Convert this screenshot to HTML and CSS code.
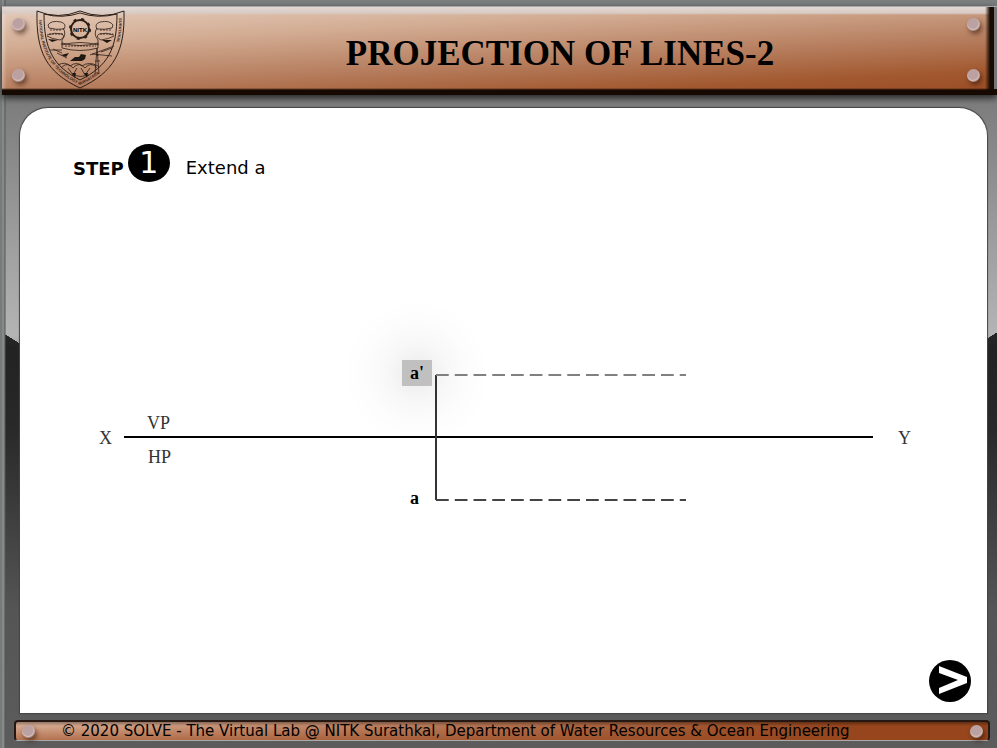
FILE: index.html
```html
<!DOCTYPE html>
<html lang="en">
<head>
<meta charset="utf-8">
<title>Projection of Lines-2</title>
<link rel="stylesheet" href="styles.css">
</head>
<body>
<div class="frame">
  <header class="banner">
    <div class="rivets"><span class="rivet"></span><span class="rivet"></span></div>
    <svg class="crest" viewBox="0 0 90 80" role="img" aria-label="NITK crest">
      <defs>
        <path id="rimLeft" d="M3 10C4 44 17 62 44 75C72 62 81 46 84 30"/>
        <path id="rimRight" d="M83 8Q83 24 79 38"/>
      </defs>
      <g fill="none" stroke="#2c1d16" stroke-width="1">
        <path d="M1 1Q22 10 44 1Q66 10 88 1C89 42 78 62 44 78C10 62 0 42 1 1Z"/>
        <path d="M8 4Q26 9 44 3Q62 9 81 4C81 39 72 56 44 70C17 56 8 39 8 4Z"/>
        <circle cx="44" cy="19" r="9" stroke-width="2"/>
        <circle cx="44" cy="19" r="10" stroke-width="2" stroke-dasharray="3 5"/>
        <path stroke-width=".8" d="M12 15q3-5 13-3q6 2 3 7q-8 1-15-1zM11 25q8-3 15-1q4 3-2 6q-8-1-13-4M77 15q-3-5-13-3q-6 2-3 7q8 1 15-1zM78 25q-8-3-15-1q-4 3 2 6q8-1 13-4M27 18q4 6-1 12v5q18-5 36 0v-5q-5-6-1-12M26 33q18 5 36 0v5q-18 5-36 0z"/>
        <path stroke-width=".8" d="M14 40h12M17 39l9 4M21 43l10 5M59 64l2-26 2 26M60 45h3M59 51h5M54 45l24-9M56 44l20 2M65 42l11-4M25 58q6-7 12 0q6-7 12 0q6-7 12 0M22 55q7-4 12 1q7-5 12 0q7-5 16 0M32 58l5 7 4-7M45 58l4 7 5-7M36 65q9 3 17 0"/>
        <path stroke-width=".8" d="M14 20h11M13 24h14M64 20h12M64 24h13M29 36h31" stroke-dasharray="2 1"/>
      </g>
      <path fill="#211712" d="M34 51l5-4h4l2-3 5 1-1 4-3 2zM25 45l8-2-3 4zM12 29l10 1-6 2zM66 30l10 0-5 3zM36 63l3 5 1-5zM48 63l3 5 1-5z"/>
      <text class="crest-mono" x="44" y="22">NITK</text>
      <text class="crest-rim"><textPath href="#rimLeft">NATIONAL INSTITUTE OF TECHNOLOGY KARNATAKA</textPath></text>
      <text class="crest-rim"><textPath href="#rimRight">SURATHKAL</textPath></text>
    </svg>
    <h1 class="title">PROJECTION OF LINES-2</h1>
    <div class="rivets"><span class="rivet"></span><span class="rivet"></span></div>
  </header>

  <main class="panel">
    <div class="step">
      <strong class="step-label">STEP</strong>
      <span class="step-number">1</span>
      <p class="step-text">Extend a</p>
    </div>
    <svg class="diagram" viewBox="0 0 967 240" role="img" aria-label="Projections of point a above and below line XY">
      <defs>
        <radialGradient id="glow">
          <stop offset="0" stop-color="#000" stop-opacity=".08"/>
          <stop offset=".4" stop-color="#000" stop-opacity=".03"/>
          <stop offset=".7" stop-color="#000" stop-opacity=".01"/>
          <stop offset="1" stop-color="#000" stop-opacity="0"/>
        </radialGradient>
      </defs>
      <circle cx="397" cy="83" r="74" fill="url(#glow)"/>
      <rect x="382" y="70" width="30" height="26" fill="#c0c0c0"/>
      <path class="axis" d="M104 147H853"/>
      <path class="projector" d="M416 85V210"/>
      <path class="dash faint" pathLength="1000" d="M416 85H666"/>
      <path class="dash" pathLength="1000" d="M416 210H666"/>
      <text class="point" x="390" y="89">a'</text>
      <text class="point" x="390" y="214">a</text>
      <text class="axis-name" x="79" y="154">X</text>
      <text class="axis-name" x="878" y="154">Y</text>
      <text class="axis-name" x="127" y="139">VP</text>
      <text class="axis-name" x="128" y="173">HP</text>
    </svg>
    <button class="next" type="button" aria-label="Next step">
      <svg viewBox="0 0 42 42"><circle cx="21" cy="21" r="21"/><path d="M10 6L38 17V23L10 34V28L29 20L10 13Z" fill="#fff"/></svg>
    </button>
  </main>

  <footer class="footer">
    <span class="rivet"></span>
    <p class="copyright">© 2020 SOLVE - The Virtual Lab @ NITK Surathkal, Department of Water Resources &amp; Ocean Engineering</p>
    <span class="rivet"></span>
  </footer>
</div>
</body>
</html>
```
FILE: styles.css
```css
* { box-sizing: border-box; }

body {
  margin: 0;
  font-family: Verdana, "DejaVu Sans", sans-serif;
  color: #000;
}

.frame {
  min-height: 100vh;
  display: flex;
  flex-direction: column;
  padding: 6px 0 7px;
  border-left: 2px solid #777b7a;
  background:
    linear-gradient(90deg, #858988 0 2px, #555 3px, transparent 4px),
    linear-gradient(#7b7f80 0 6px, transparent 6px),
    linear-gradient(32deg, #242424 49%, transparent 50%) 0 332px / 20px 13px no-repeat,
    linear-gradient(-32deg, #242424 49%, transparent 50%) 100% 332px / 20px 13px no-repeat,
    linear-gradient(#808080 0, #7e7e7e 108px, #b4b4b4 335px, #aaa 344px, #222 345px, #292929 430px, #555 610px, #5c5c5c 100%);
}

.banner {
  height: 89px;
  display: flex;
  align-items: center;
  padding: 0 17px 2px 10px;
  border-top: 1px solid #aaa;
  background:
    linear-gradient(#777, #777) 100% 0 / 3px 82px no-repeat,
    linear-gradient(transparent 81px, #160902 83px),
    linear-gradient(270deg, #180b04 0, #180b04 7px, transparent 12px),
    linear-gradient(#e2d8d3 0, #d8cbc4 6px, transparent 8px),
    linear-gradient(90deg, rgba(255, 255, 255, .3), transparent 5px),
    linear-gradient(177deg, #e5cdbd 0, #d3ad94 28%, #b77f60 58%, #a25930 82%, #9b4b23 100%);
  box-shadow: 0 3px 7px #222;
}

.rivets {
  height: 64px;
  display: flex;
  flex-direction: column;
  justify-content: space-between;
}

.rivet {
  flex: none;
  width: 13px;
  height: 13px;
  border-radius: 50%;
  background: radial-gradient(circle at 45% 40%, #bba1a1 45%, #d2bbb9 60%, #8c706b 75%);
  box-shadow: 2px 3px 5px rgba(50, 20, 5, .6);
}

.crest {
  width: 90px;
  height: 80px;
  margin: 0 13px 0 11px;
}

.crest-mono {
  font: bold 6px "Liberation Sans", sans-serif;
  text-anchor: middle;
}

.crest-rim {
  font: bold 4px "Liberation Sans", sans-serif;
  fill: #35231b;
}

.title {
  flex: 1;
  margin: 0;
  padding: 8px 0 0 14px;
  text-align: center;
  font: bold 35px "Liberation Serif", serif;
}

.panel {
  flex: 1;
  display: flex;
  flex-direction: column;
  margin: 13px 10px 0 18px;
  padding: 36px 0 11px;
  border-radius: 28px 28px 0 0;
  background: #fff;
  box-shadow: 0 0 1px 1px #444;
}

.step {
  display: flex;
  align-items: center;
  gap: 4px;
  padding-left: 53px;
  font-size: 18px;
}

.step-label { padding-top: 10px; }

.step-number {
  width: 42px;
  height: 38px;
  border-radius: 50%;
  background: #000;
  color: #fff;
  font-size: 30px;
  line-height: 38px;
  text-align: center;
}

.step-text {
  margin: 0 12px;
  padding-top: 8px;
}

.diagram {
  display: block;
  width: 100%;
  margin-top: 108px;
}

.axis, .projector, .dash { fill: none; stroke: #000; stroke-width: 2; }
.projector { stroke: #333; }
.dash { stroke: #444; stroke-dasharray: 51 24; }
.faint { stroke: #808080; }
.point { font: bold 18px "Liberation Serif", serif; }
.axis-name { font: 18px "Liberation Serif", serif; fill: #333; }

.next {
  width: 42px;
  height: 42px;
  margin: auto 16px 0 auto;
  padding: 0;
  border: 0;
  background: none;
  cursor: pointer;
}

.next svg { display: block; }

.footer {
  display: flex;
  align-items: center;
  gap: 26px;
  height: 21px;
  margin: 7px 7px 0 12px;
  padding: 0 5px 0 6px;
  border: 2px solid #251812;
  border-bottom: 1px solid #aaa;
  border-radius: 4px;
  background:
    linear-gradient(rgba(0, 0, 0, .35), transparent 4px),
    linear-gradient(90deg, transparent, #96451c 85%),
    linear-gradient(#dfb9a3, #b57452);
}

.copyright {
  flex: 1;
  margin: 0;
  font-size: 15px;
  line-height: 18px;
  white-space: nowrap;
}
```
